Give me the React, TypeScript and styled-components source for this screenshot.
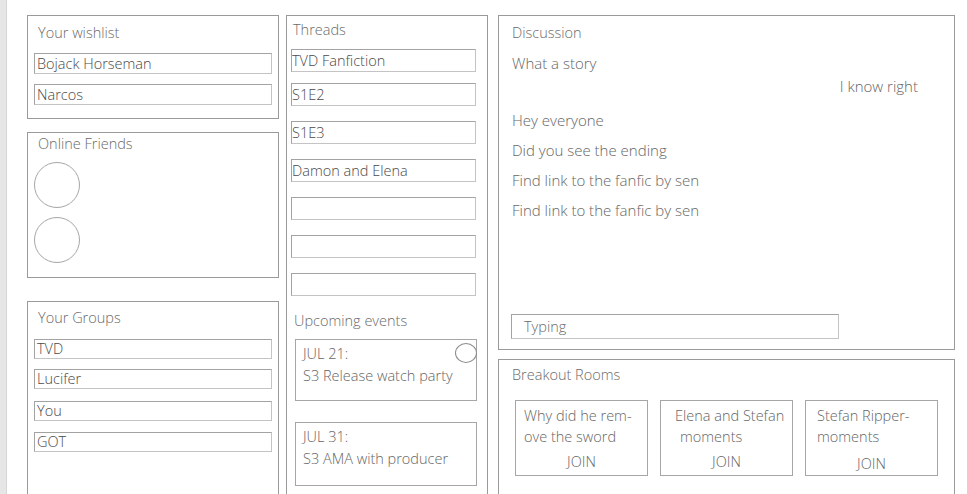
import React, {FC} from 'react';
import styled, {createGlobalStyle} from 'styled-components';

/*
 * Data.
 */

const wishlist = ['Bojack Horseman', 'Narcos'];
const groups = ['TVD', 'Lucifer', 'You', 'GOT'];
const threads = ['TVD Fanfiction', 'S1E2', 'S1E3', 'Damon and Elena', '', '', ''];
const events = [
  {date: 'JUL 21:', title: 'S3 Release watch party', marked: true},
  {date: 'JUL 31:', title: 'S3 AMA with producer', marked: false},
];
const messages = [
  {text: 'What a story', mine: false, height: 23},
  {text: 'I know right', mine: true, height: 34},
  {text: 'Hey everyone', mine: false, height: 30},
  {text: 'Did you see the ending', mine: false, height: 30},
  {text: 'Find link to the fanfic by sen', mine: false, height: 30},
  {text: 'Find link to the fanfic by sen', mine: false, height: 30},
];
const rooms = [
  {lines: ['Why did he rem-', 'ove the sword'], indents: [8, 8], drop: 0},
  {lines: ['Elena and Stefan', 'moments'], indents: [14, 19], drop: 0},
  {lines: ['Stefan Ripper-', 'moments'], indents: [11, 11], drop: 2},
];

const groupTops = [11, 10, 12, 11];
const threadTops = [9, 11, 15, 15, 15, 15, 15];

/*
 * Style.
 */

const GlobalStyle = createGlobalStyle`
  html, body {
    margin: 0;
    padding: 0;
    background: #ffffff;
  }
  body {
    font-family: 'Open Sans', 'Noto Sans', sans-serif;
    font-weight: 300;
    color: #666666;
  }
`;

const StyledPage = styled.div`
  display: flex;
  height: 494px;
  overflow: hidden;
`;

const StyledSideStripe = styled.div`
  width: 6px;
  flex-shrink: 0;
  background: #e6e6e6;
  border-right: 1px solid #d6d6d6;
`;

const StyledBoard = styled.div`
  display: flex;
  align-items: flex-start;
  padding: 15px 0 0 20px;
`;

const StyledColumn = styled.div<{$width: number; $gap?: number}>`
  display: flex;
  flex-direction: column;
  width: ${p => p.$width}px;
  margin-right: ${p => p.$gap ?? 0}px;
  flex-shrink: 0;
`;

const StyledPanel = styled.div<{$height: number; $top?: number}>`
  box-sizing: border-box;
  height: ${p => p.$height}px;
  margin-top: ${p => p.$top ?? 0}px;
  border: 1px solid #9a9a9a;
  padding: 0 6px;
  display: flex;
  flex-direction: column;
`;

const StyledTitle = styled.div<{$top: number; $left?: number}>`
  font-size: 14.5px;
  line-height: 20px;
  color: #6a6a6a;
  margin-top: ${p => p.$top}px;
  padding-left: ${p => p.$left ?? 4}px;
  white-space: nowrap;
`;

const StyledField = styled.div<{$top: number; $height?: number; $shift?: number}>`
  box-sizing: border-box;
  height: ${p => p.$height ?? 21}px;
  margin-top: ${p => p.$top}px;
  margin-left: ${p => p.$shift ?? 0}px;
  border: 1px solid #a3a3a3;
  border-right-color: #c4c4c4;
  border-bottom-color: #c4c4c4;
  padding-left: 2px;
  font-size: 14.5px;
  line-height: ${p => (p.$height ?? 21) - 2}px;
  color: #4a4a4a;
  white-space: nowrap;
  overflow: hidden;
`;

const StyledThreadField = styled(StyledField)`
  width: 185px;
  padding-left: 0;
`;

const StyledAvatar = styled.div<{$top: number}>`
  width: 46px;
  height: 46px;
  box-sizing: border-box;
  margin-top: ${p => p.$top}px;
  border: 1px solid #a6a6a6;
  border-radius: 50%;
`;

const StyledEventCard = styled.div<{$top: number; $height: number}>`
  position: relative;
  box-sizing: border-box;
  width: 182px;
  height: ${p => p.$height}px;
  margin: ${p => p.$top}px 0 0 2px;
  border: 1px solid #a6a6a6;
  padding: 3px 0 0 7px;
  font-size: 14.5px;
  line-height: 22px;
  color: #666666;
`;

const StyledEventMark = styled.div`
  position: absolute;
  top: 3px;
  right: -1px;
  width: 22px;
  height: 20px;
  box-sizing: border-box;
  border: 1px solid #8c8c8c;
  border-radius: 50%;
  background: #ffffff;
`;

const StyledMessageList = styled.div`
  display: flex;
  flex-direction: column;
  margin-top: 10px;
  flex: 1;
`;

const StyledMessage = styled.div<{$mine: boolean; $height: number}>`
  font-size: 15px;
  line-height: 20px;
  height: ${p => p.$height}px;
  padding: 0 ${p => (p.$mine ? 30 : 0)}px 0 7px;
  text-align: ${p => (p.$mine ? 'right' : 'left')};
  color: #666666;
  white-space: nowrap;
`;

const StyledComposer = styled.div`
  box-sizing: border-box;
  width: 328px;
  height: 25px;
  margin: 0 0 10px 6px;
  border: 1px solid #a3a3a3;
  border-right-color: #c4c4c4;
  border-bottom-color: #c4c4c4;
  padding-left: 12px;
  font-size: 14.5px;
  line-height: 23px;
  color: #6a6a6a;
`;

const StyledRoomRow = styled.div`
  display: flex;
  gap: 12px;
  margin: 15px 0 0 10px;
`;

const StyledRoomCard = styled.div`
  box-sizing: border-box;
  width: 133px;
  height: 76px;
  border: 1px solid #a6a6a6;
  display: flex;
  flex-direction: column;
  padding-top: 4px;
  font-size: 14.5px;
  line-height: 21px;
  color: #666666;
`;

const StyledRoomLine = styled.div<{$indent: number}>`
  padding-left: ${p => p.$indent}px;
  white-space: nowrap;
`;

const StyledJoin = styled.div<{$drop: number}>`
  margin-top: ${p => 4 + p.$drop}px;
  text-align: center;
`;

/*
 * Component.
 */

const App: FC = () => (
  <>
    <GlobalStyle />
    <StyledPage>
      <StyledSideStripe />
      <StyledBoard>
        <StyledColumn $width={252} $gap={7}>
          <StyledPanel $height={104}>
            <StyledTitle $top={7}>Your wishlist</StyledTitle>
            {wishlist.map(item => (
              <StyledField key={item} $top={10}>
                {item}
              </StyledField>
            ))}
          </StyledPanel>
          <StyledPanel $height={146} $top={13}>
            <StyledTitle $top={1}>Online Friends</StyledTitle>
            <StyledAvatar $top={8} />
            <StyledAvatar $top={9} />
          </StyledPanel>
          <StyledPanel $height={220} $top={23}>
            <StyledTitle $top={6}>Your Groups</StyledTitle>
            {groups.map((item, i) => (
              <StyledField key={item} $top={groupTops[i]} $height={20}>
                {item}
              </StyledField>
            ))}
          </StyledPanel>
        </StyledColumn>

        <StyledColumn $width={202} $gap={10}>
          <StyledPanel $height={500}>
            <StyledTitle $top={4} $left={-1}>
              Threads
            </StyledTitle>
            {threads.map((item, i) => (
              <StyledThreadField key={i} $top={threadTops[i]} $height={23} $shift={-2}>
                {item}
              </StyledThreadField>
            ))}
            <StyledTitle $top={15} $left={1}>
              Upcoming events
            </StyledTitle>
            {events.map((ev, i) => (
              <StyledEventCard key={ev.date} $top={i === 0 ? 8 : 21} $height={i === 0 ? 62 : 64}>
                <div>{ev.date}</div>
                <div>{ev.title}</div>
                {ev.marked && <StyledEventMark />}
              </StyledEventCard>
            ))}
          </StyledPanel>
        </StyledColumn>

        <StyledColumn $width={457}>
          <StyledPanel $height={335}>
            <StyledTitle $top={7} $left={7}>
              Discussion
            </StyledTitle>
            <StyledMessageList>
              {messages.map((m, i) => (
                <StyledMessage key={i} $mine={m.mine} $height={m.height}>
                  {m.text}
                </StyledMessage>
              ))}
            </StyledMessageList>
            <StyledComposer>Typing</StyledComposer>
          </StyledPanel>
          <StyledPanel $height={200} $top={9}>
            <StyledTitle $top={5} $left={7}>
              Breakout Rooms
            </StyledTitle>
            <StyledRoomRow>
              {rooms.map((room, i) => (
                <StyledRoomCard key={i}>
                  {room.lines.map((line, j) => (
                    <StyledRoomLine key={j} $indent={room.indents[j]}>
                      {line}
                    </StyledRoomLine>
                  ))}
                  <StyledJoin $drop={room.drop}>JOIN</StyledJoin>
                </StyledRoomCard>
              ))}
            </StyledRoomRow>
          </StyledPanel>
        </StyledColumn>
      </StyledBoard>
    </StyledPage>
  </>
);

export default App;
